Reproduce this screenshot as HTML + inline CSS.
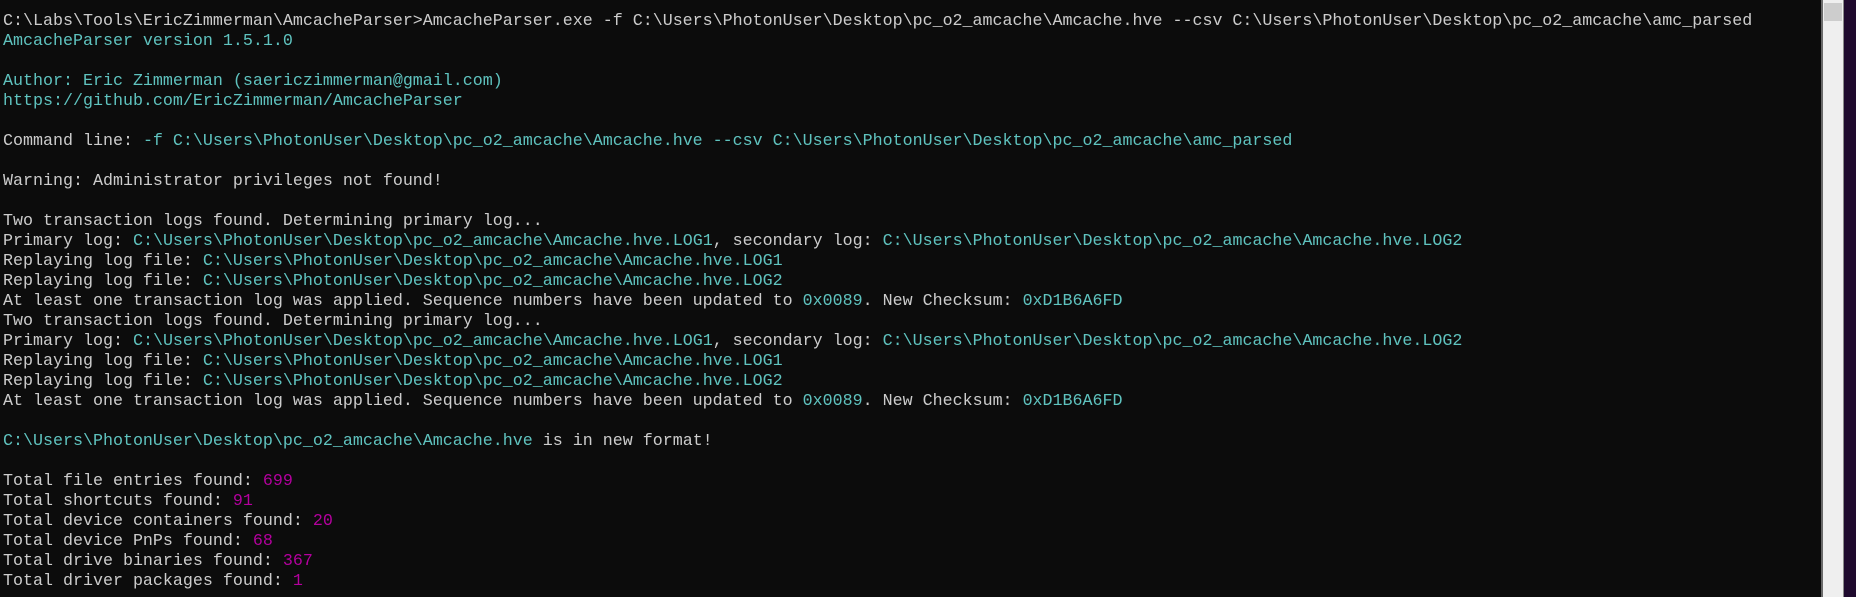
<!DOCTYPE html>
<html><head><style>
html,body{margin:0;padding:0;width:1856px;height:597px;overflow:hidden;background:#0c0c0c;}
pre{position:absolute;left:3px;top:12px;margin:0;font-family:"Liberation Mono",monospace;font-size:16.67px;line-height:20px;color:#cccccc;white-space:pre;}
.c{color:#5fc3bf}.m{color:#b4009e}
#sb{position:absolute;left:1821px;top:0;width:2px;height:597px;background:#6a6a6a}
#tr{position:absolute;left:1823px;top:0;width:20px;height:597px;background:#efefef}
#th{position:absolute;left:1824px;top:3px;width:18px;height:18px;background:#cdcdcd}
#pu{position:absolute;left:1843px;top:0;width:13px;height:597px;background:#1f0a2e;border-left:1px solid #8a8a8a}
</style></head><body>
<pre>C:\Labs\Tools\EricZimmerman\AmcacheParser&gt;AmcacheParser.exe -f C:\Users\PhotonUser\Desktop\pc_o2_amcache\Amcache.hve --csv C:\Users\PhotonUser\Desktop\pc_o2_amcache\amc_parsed
<span class="c">AmcacheParser version 1.5.1.0</span>

<span class="c">Author: Eric Zimmerman (saericzimmerman@gmail.com)</span>
<span class="c">https://github.com/EricZimmerman/AmcacheParser</span>

Command line: <span class="c">-f C:\Users\PhotonUser\Desktop\pc_o2_amcache\Amcache.hve --csv C:\Users\PhotonUser\Desktop\pc_o2_amcache\amc_parsed</span>

Warning: Administrator privileges not found!

Two transaction logs found. Determining primary log...
Primary log: <span class="c">C:\Users\PhotonUser\Desktop\pc_o2_amcache\Amcache.hve.LOG1</span>, secondary log: <span class="c">C:\Users\PhotonUser\Desktop\pc_o2_amcache\Amcache.hve.LOG2</span>
Replaying log file: <span class="c">C:\Users\PhotonUser\Desktop\pc_o2_amcache\Amcache.hve.LOG1</span>
Replaying log file: <span class="c">C:\Users\PhotonUser\Desktop\pc_o2_amcache\Amcache.hve.LOG2</span>
At least one transaction log was applied. Sequence numbers have been updated to <span class="c">0x0089</span>. New Checksum: <span class="c">0xD1B6A6FD</span>
Two transaction logs found. Determining primary log...
Primary log: <span class="c">C:\Users\PhotonUser\Desktop\pc_o2_amcache\Amcache.hve.LOG1</span>, secondary log: <span class="c">C:\Users\PhotonUser\Desktop\pc_o2_amcache\Amcache.hve.LOG2</span>
Replaying log file: <span class="c">C:\Users\PhotonUser\Desktop\pc_o2_amcache\Amcache.hve.LOG1</span>
Replaying log file: <span class="c">C:\Users\PhotonUser\Desktop\pc_o2_amcache\Amcache.hve.LOG2</span>
At least one transaction log was applied. Sequence numbers have been updated to <span class="c">0x0089</span>. New Checksum: <span class="c">0xD1B6A6FD</span>

<span class="c">C:\Users\PhotonUser\Desktop\pc_o2_amcache\Amcache.hve</span> is in new format!

Total file entries found: <span class="m">699</span>
Total shortcuts found: <span class="m">91</span>
Total device containers found: <span class="m">20</span>
Total device PnPs found: <span class="m">68</span>
Total drive binaries found: <span class="m">367</span>
Total driver packages found: <span class="m">1</span></pre>
<div id="sb"></div><div id="tr"></div><div id="th"></div><div id="pu"></div>
</body></html>
